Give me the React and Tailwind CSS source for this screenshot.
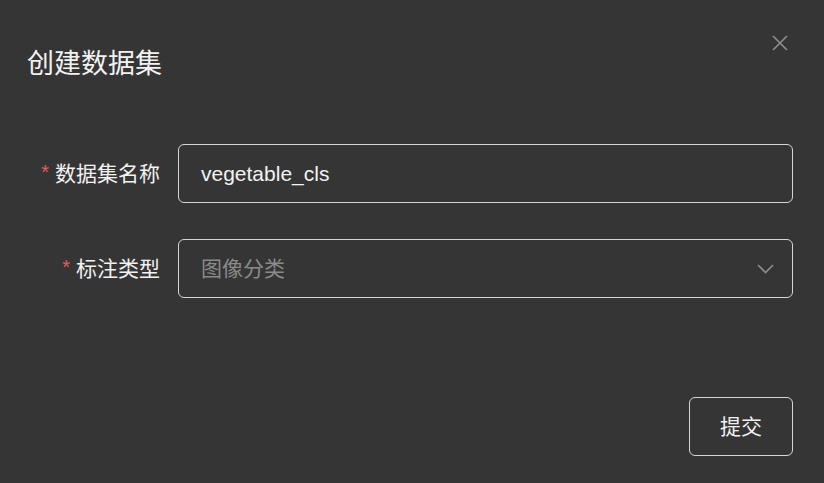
import React from "react";

export default function App() {
  const font = { fontFamily: '"Liberation Sans", "Noto Sans CJK SC", sans-serif' };
  return (
    <div
      className="relative w-[824px] h-[483px] bg-[#353535] text-[#f2f2f2] overflow-hidden"
      style={font}
    >
      <button className="absolute left-[771px] top-[34px] w-[18px] h-[18px] flex items-center justify-center">
        <svg width="18" height="18" viewBox="0 0 18 18" fill="none">
          <path d="M2 2L16 16M16 2L2 16" stroke="#8e8e8e" strokeWidth="1.6" />
        </svg>
      </button>

      <div className="pl-[27px] pt-[46px]">
        <h1 className="text-[27px] leading-[36px] font-normal">创建数据集</h1>
      </div>

      <div className="mt-[62px] flex flex-col gap-[36px]">
        <div className="flex items-center gap-[18px]">
          <div className="w-[160px] flex justify-end items-center">
            <span className="text-[#e35d5d] text-[20px] leading-none mr-[6px] mt-[-4px]">*</span>
            <span className="text-[21px] leading-none">数据集名称</span>
          </div>
          <div className="w-[615px] h-[59px] border border-[#d6d6d6] rounded-[6px] flex items-center pl-[22px]">
            <span className="text-[21px] leading-none">vegetable_cls</span>
          </div>
        </div>

        <div className="flex items-center gap-[18px]">
          <div className="w-[160px] flex justify-end items-center">
            <span className="text-[#e35d5d] text-[20px] leading-none mr-[6px] mt-[-4px]">*</span>
            <span className="text-[21px] leading-none">标注类型</span>
          </div>
          <div className="w-[615px] h-[59px] border border-[#d6d6d6] rounded-[6px] flex items-center justify-between pl-[22px] pr-[18px]">
            <span className="text-[21px] leading-none text-[#8a8a8a]">图像分类</span>
            <svg width="17" height="10" viewBox="0 0 17 10" fill="none">
              <path d="M1 1L8.5 8.5L16 1" stroke="#8e8e8e" strokeWidth="1.6" />
            </svg>
          </div>
        </div>
      </div>

      <div className="flex justify-end pr-[31px] mt-[99px]">
        <button className="w-[104px] h-[59px] border border-[#d6d6d6] rounded-[6px] flex items-center justify-center text-[21px] leading-none text-[#f2f2f2]">
          提交
        </button>
      </div>
    </div>
  );
}
